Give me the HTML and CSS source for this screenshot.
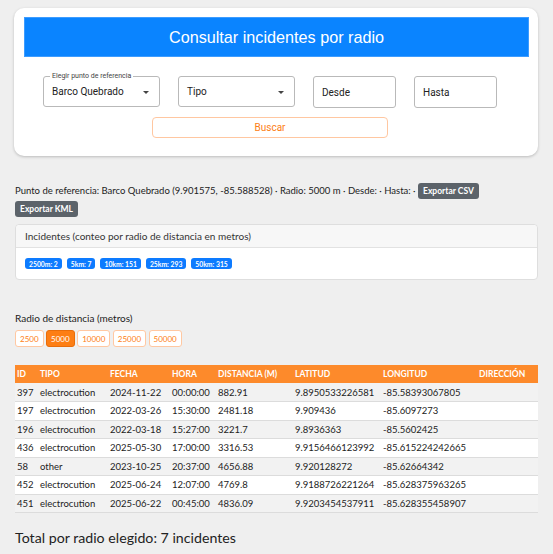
FILE: index.html
```html
<!DOCTYPE html>
<html lang="es">
<head>
<meta charset="utf-8">
<title>Consultar incidentes por radio</title>
<link rel="stylesheet" href="styles.css">
</head>
<body>
<section class="card">
  <h1 class="card-title">Consultar incidentes por radio</h1>
  <div class="form-row">
    <div class="field field-select">
      <span class="field-label">Elegir punto de referencia</span>
      <span class="field-value">Barco Quebrado</span>
      <span class="caret"></span>
    </div>
    <div class="field field-select">
      <span class="field-value">Tipo</span>
      <span class="caret"></span>
    </div>
    <div class="field field-date"><span class="field-value">Desde</span></div>
    <div class="field field-date"><span class="field-value">Hasta</span></div>
  </div>
  <div class="action-row">
    <button class="btn-search">Buscar</button>
  </div>
</section>

<main class="results">
  <p class="summary">Punto de referencia: Barco Quebrado (9.901575, -85.588528) · Radio: 5000 m · Desde: · Hasta: · <button class="btn-dark">Exportar CSV</button> <button class="btn-dark">Exportar KML</button></p>

  <div class="counts">
    <div class="counts-head">Incidentes (conteo por radio de distancia en metros)</div>
    <div class="counts-body">
      <span class="badge">2500m: 2</span>
      <span class="badge">5km: 7</span>
      <span class="badge">10km: 151</span>
      <span class="badge">25km: 293</span>
      <span class="badge">50km: 315</span>
    </div>
  </div>

  <div class="radius">
    <div class="radius-label">Radio de distancia (metros)</div>
    <div class="radius-buttons">
      <button class="rbtn">2500</button>
      <button class="rbtn active">5000</button>
      <button class="rbtn">10000</button>
      <button class="rbtn">25000</button>
      <button class="rbtn">50000</button>
    </div>
  </div>

  <table class="grid">
    <colgroup>
      <col class="c-id"><col class="c-tipo"><col class="c-fecha"><col class="c-hora"><col class="c-dist"><col class="c-lat"><col class="c-lon"><col class="c-dir">
    </colgroup>
    <thead>
      <tr><th>ID</th><th>Tipo</th><th>Fecha</th><th>Hora</th><th>Distancia (m)</th><th>Latitud</th><th>Longitud</th><th>Dirección</th></tr>
    </thead>
    <tbody>
      <tr><td>397</td><td>electrocution</td><td>2024-11-22</td><td>00:00:00</td><td>882.91</td><td>9.8950533226581</td><td>-85.58393067805</td><td></td></tr>
      <tr><td>197</td><td>electrocution</td><td>2022-03-26</td><td>15:30:00</td><td>2481.18</td><td>9.909436</td><td>-85.6097273</td><td></td></tr>
      <tr><td>196</td><td>electrocution</td><td>2022-03-18</td><td>15:27:00</td><td>3221.7</td><td>9.8936363</td><td>-85.5602425</td><td></td></tr>
      <tr><td>436</td><td>electrocution</td><td>2025-05-30</td><td>17:00:00</td><td>3316.53</td><td>9.9156466123992</td><td>-85.615224242665</td><td></td></tr>
      <tr><td>58</td><td>other</td><td>2023-10-25</td><td>20:37:00</td><td>4656.88</td><td>9.920128272</td><td>-85.62664342</td><td></td></tr>
      <tr><td>452</td><td>electrocution</td><td>2025-06-24</td><td>12:07:00</td><td>4769.8</td><td>9.9188726221264</td><td>-85.628375963265</td><td></td></tr>
      <tr><td>451</td><td>electrocution</td><td>2025-06-22</td><td>00:45:00</td><td>4836.09</td><td>9.9203454537911</td><td>-85.628355458907</td><td></td></tr>
    </tbody>
  </table>

  <p class="total">Total por radio elegido: 7 incidentes</p>
</main>
</body>
</html>
```

FILE: styles.css
```css
* { box-sizing: border-box; }

html, body {
  margin: 0;
  padding: 0;
  background: #efefef;
  font-family: Lato, "Noto Sans", sans-serif;
  color: #222;
}

body {
  padding: 8px 15px 0 14px;
}

button {
  font-family: inherit;
  cursor: pointer;
}

/* ---- search card ---- */
.card {
  background: #fff;
  border-radius: 10px;
  box-shadow: 0 1px 3px rgba(0, 0, 0, 0.22);
  padding: 9px 9px 18px 10px;
}

.card-title {
  margin: 0;
  height: 40px;
  background: #0a84ff;
  border: 1px solid #3d9cff;
  color: #fff;
  font-family: "Liberation Sans", Arial, sans-serif;
  font-weight: normal;
  font-size: 16.2px;
  display: flex;
  align-items: center;
  justify-content: center;
}

.form-row {
  display: flex;
  justify-content: center;
  gap: 18px;
  margin-top: 19px;
  padding-right: 13px;
  font-family: Roboto, "Noto Sans", sans-serif;
}

.field {
  position: relative;
  height: 32px;
  border: 1px solid #b9b9b9;
  border-radius: 3px;
  display: flex;
  align-items: center;
  padding-left: 8px;
  font-size: 10px;
  color: #222;
}

.field-select { width: 117px; height: 31px; }
.field-date { width: 83px; }

.field-label {
  position: absolute;
  left: 6px;
  top: -5px;
  padding: 0 2px;
  background: #fff;
  font-size: 7px;
  line-height: 8px;
  color: #444;
}

.caret {
  position: absolute;
  right: 10px;
  top: 14px;
  width: 0;
  height: 0;
  border-left: 3px solid transparent;
  border-right: 3px solid transparent;
  border-top: 3px solid #444;
}

.action-row {
  display: flex;
  justify-content: center;
  padding-right: 13px;
  margin-top: 9px;
}

.btn-search {
  width: 236px;
  height: 21px;
  background: #fff;
  border: 1px solid #ffc7a1;
  border-radius: 4px;
  color: #fd7e14;
  font-family: Roboto, "Noto Sans", sans-serif;
  font-size: 10px;
  padding: 0;
}

/* ---- results ---- */
.results {
  padding-left: 1px;
}

.summary {
  margin: 26px 0 0 0;
  font-size: 9.5px;
  line-height: 17px;
  color: #222;
}

.btn-dark {
  display: inline-block;
  height: 16px;
  padding: 0 5px;
  border: 0;
  border-radius: 3px;
  background: #5c636a;
  color: #fff;
  font-size: 8.5px;
  font-weight: bold;
  vertical-align: middle;
  margin-bottom: 2px;
}

.counts {
  margin-top: 5px;
  background: #fff;
  border: 1px solid #dedede;
  border-radius: 4px;
}

.counts-head {
  height: 23px;
  display: flex;
  align-items: center;
  padding-left: 9px;
  background: #f7f7f7;
  border-bottom: 1px solid #e2e2e2;
  border-radius: 4px 4px 0 0;
  font-size: 10px;
  color: #333;
}

.counts-body {
  display: flex;
  gap: 5px;
  padding: 10px 9px 10px 9px;
}

.badge {
  display: inline-flex;
  align-items: center;
  height: 11px;
  padding: 0 4px;
  background: #0d7bff;
  border-radius: 3px;
  color: #fff;
  font-size: 6.8px;
  font-weight: bold;
}

.radius {
  margin-top: 32px;
}

.radius-label {
  font-size: 10px;
  line-height: 13px;
  color: #222;
}

.radius-buttons {
  display: flex;
  gap: 2.5px;
  margin-top: 5px;
}

.rbtn {
  height: 17px;
  padding: 0 4px;
  background: #fff;
  border: 1px solid #ffc8a2;
  border-radius: 3px;
  color: #fd7e14;
  font-size: 8px;
}

.rbtn.active {
  background: #fd7e14;
  border-color: #e86d0a;
  color: #fff;
}

.grid {
  margin-top: 18px;
  width: 523px;
  border-collapse: collapse;
  table-layout: fixed;
  font-size: 9.5px;
}

.c-id { width: 23px; }
.c-tipo { width: 70px; }
.c-fecha { width: 62px; }
.c-hora { width: 46px; }
.c-dist { width: 77px; }
.c-lat { width: 88px; }
.c-lon { width: 96px; }
.c-dir { width: 61px; }

.grid th {
  background: #fd8a2b;
  color: #fff;
  font-weight: bold;
  text-transform: uppercase;
  text-align: left;
  font-size: 8.5px;
  height: 18px;
  padding: 0 0 0 2px;
  white-space: nowrap;
}

.grid td {
  height: 18.5px;
  padding: 0 0 0 2px;
  border-bottom: 1px solid #dcdcdc;
  white-space: nowrap;
  color: #222;
}

.grid tbody tr:nth-child(odd) td { background: #f2f2f2; }
.grid tbody tr:nth-child(even) td { background: #fff; }

.total {
  margin: 16px 0 0 0;
  font-size: 14.2px;
  color: #222;
}
```
